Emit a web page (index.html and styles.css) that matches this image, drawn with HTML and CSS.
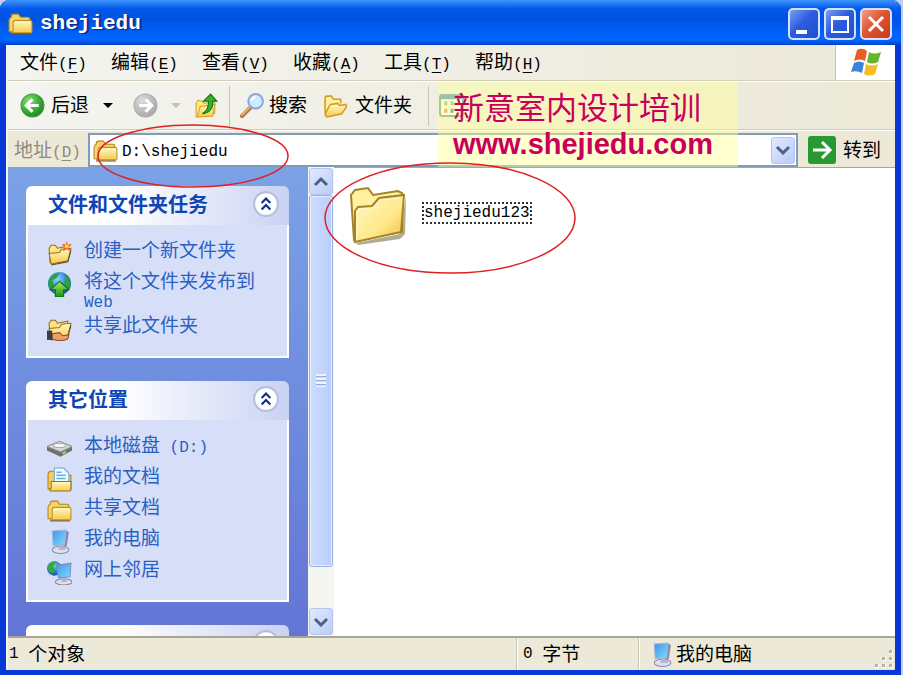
FILE: index.html
```
<!DOCTYPE html>
<html lang="zh-CN">
<head>
<meta charset="utf-8">
<title>shejiedu</title>
<link rel="stylesheet" href="styles.css">
</head>
<body>
<svg class="defs" width="0" height="0" aria-hidden="true">
	<defs>
		<linearGradient id="gFolder" x1="0" y1="0" x2="0" y2="1"><stop offset="0" stop-color="#fffbc4"/><stop offset="1" stop-color="#f8c84c"/></linearGradient>
		<linearGradient id="gBig" x1="0" y1="0" x2="1" y2="1"><stop offset="0" stop-color="#fffac0"/><stop offset=".6" stop-color="#ffe88c"/><stop offset="1" stop-color="#f2bd3c"/></linearGradient>
		<radialGradient id="gGreen" cx=".35" cy=".3" r=".8"><stop offset="0" stop-color="#8fdc7c"/><stop offset=".55" stop-color="#3aad36"/><stop offset="1" stop-color="#1c7d1c"/></radialGradient>
		<radialGradient id="gGrey" cx=".35" cy=".3" r=".8"><stop offset="0" stop-color="#dcdcdc"/><stop offset="1" stop-color="#a4a4a4"/></radialGradient>
		<linearGradient id="gScreen" x1="0" y1="0" x2="1" y2="1"><stop offset="0" stop-color="#3f93e6"/><stop offset="1" stop-color="#7fdcff"/></linearGradient>
		<radialGradient id="gGlobe" cx=".4" cy=".3" r=".8"><stop offset="0" stop-color="#8ed4ff"/><stop offset=".6" stop-color="#2677d0"/><stop offset="1" stop-color="#123f94"/></radialGradient>
		<linearGradient id="gArrow" x1="0" y1="0" x2="0" y2="1"><stop offset="0" stop-color="#a8ee58"/><stop offset="1" stop-color="#189018"/></linearGradient>
	</defs>
	<symbol id="folder" viewBox="0 0 24 24">
		<path d="M3 6Q1 7 1 9V20H21V8Q21 6 19 6H12L10 3H5Q3 3 3 6Z" fill="#f6d469" stroke="#b98518"/>
		<path d="M5 11Q5 9 7 9H21Q23 9 23 11V20Q23 21 22 21H3Q5 20 5 18Z" fill="url(#gFolder)" stroke="#c08f20"/>
		<path d="M3 22H22" stroke="#73540f" stroke-width="1"/>
	</symbol>
	<symbol id="folders" viewBox="0 0 24 24">
		<path d="M2 19V5Q2 3 4 3H8L10 6H17V10" fill="#fff2a0" stroke="#d39c20" stroke-width="1.5"/>
		<path d="M2 20L7 11L14 10L16 12L22 11Q23 12 22 14L18 20L4 23Q2 22 2 20Z" fill="url(#gFolder)" stroke="#d39c20" stroke-width="1.5"/>
	</symbol>
	<symbol id="openfolder" viewBox="0 0 24 24">
		<path d="M3 21L2 7L4 4L8 4L10 7L20 5V15L18 20Z" fill="#ffe37c" stroke="#94701e"/>
		<path d="M2 12L12 11L14 8L23 7L20 19L4 22Z" fill="url(#gFolder)" stroke="#94701e"/>
		<path d="M4 23L20 20L23 9" fill="none" stroke="#5e4a22"/>
	</symbol>
	<symbol id="back" viewBox="0 0 24 24">
		<circle cx="12" cy="12" r="11" fill="url(#gGreen)" stroke="#3c9b38"/>
		<path d="M18 12H7M12 6L6 12L12 18" fill="none" stroke="#fff" stroke-width="3"/>
	</symbol>
	<symbol id="forward" viewBox="0 0 24 24">
		<circle cx="12" cy="12" r="11" fill="url(#gGrey)" stroke="#aaa"/>
		<path d="M6 12H17M12 6L18 12L12 18" fill="none" stroke="#fff" stroke-width="3"/>
	</symbol>
	<symbol id="up" viewBox="0 0 24 24">
		<path d="M2 23V10L4 7L8 8L10 10L20 8V19L17 22Z" fill="#ffe97e" stroke="#d2a52e"/>
		<path d="M3 23L6 13L20 11L18 22Z" fill="url(#gFolder)" stroke="#d2a52e"/>
		<path d="M8 20Q14 17 14 8H9L16 1L22 8H18Q19 18 8 20Z" fill="#35b02c" stroke="#137713"/>
	</symbol>
	<symbol id="search" viewBox="0 0 24 24">
		<path d="M2 22L10 14" stroke="#b5793e" stroke-width="4" stroke-linecap="round"/>
		<path d="M2 21L9 14" stroke="#f0b57a" stroke-width="1.5" stroke-linecap="round"/>
		<circle cx="15" cy="8" r="7" fill="#cdeaff" stroke="#8ca9de" stroke-width="2"/>
		<path d="M11 7Q12 4 15 4" fill="none" stroke="#fff" stroke-width="2"/>
	</symbol>
	<symbol id="views" viewBox="0 0 24 24">
		<rect x="1" y="2" width="22" height="20" rx="2" fill="#fffff0" stroke="#5e93b5" stroke-width="2"/>
		<path d="M1 4H23" stroke="#4d8fc0" stroke-width="4"/>
		<path d="M5 8h3v4h-3zM11 8h3v4h-3z" fill="#7cb58d"/><path d="M5 15h3v4h-3z" fill="#ed7546"/><path d="M11 15h3v4h-3z" fill="#3f73be"/>
	</symbol>
	<symbol id="newfolder" viewBox="0 0 24 24">
		<use href="#openfolder"/>
		<path d="M19 0L20 3L24 3L21 6L23 10L19 8L15 10L17 6L14 3L18 3Z" fill="#f46422"/><circle cx="19" cy="5" r="2" fill="#ffcf4a"/>
	</symbol>
	<symbol id="publish" viewBox="0 0 24 24">
		<circle cx="12" cy="11" r="11" fill="url(#gGlobe)"/>
		<path d="M2 7Q6 0 12 1L9 6L5 8L7 13L3 16Q0 12 2 7ZM16 2Q22 5 23 12L20 17L16 11L18 7Z" fill="#2ea13c"/>
		<path d="M12 9L21 17H16V24H8V17H3Z" fill="url(#gArrow)" stroke="#096a14"/>
	</symbol>
	<symbol id="share" viewBox="0 0 24 24">
		<use href="#openfolder"/>
		<path d="M5 17L12 16L15 19L21 18L20 22Q13 25 5 22Z" fill="#e9a268" stroke="#8f4c24"/>
		<path d="M0 14H5V23H0Z" fill="#3c3c48"/>
	</symbol>
	<symbol id="disk" viewBox="0 0 24 24">
		<path d="M0 10L12 5L24 10V14L13 20L0 14Z" fill="#707070"/>
		<path d="M0 10L12 5L24 10L13 15Z" fill="#d9d9d6" stroke="#999"/>
		<ellipse cx="12" cy="9" rx="6" ry="2" fill="#f5f5f5" stroke="#aaa"/>
		<path d="M15 17L18 15" stroke="#6ff06f" stroke-width="2"/>
	</symbol>
	<symbol id="docs" viewBox="0 0 24 24">
		<path d="M1 21V7Q1 4 4 4H8V21Z" fill="#f4cd5c" stroke="#b18018"/>
		<path d="M20 8H23V21H18Z" fill="#f4cd5c" stroke="#b18018"/>
		<path d="M7 1H16L21 6V17H7Z" fill="#eefbff" stroke="#6ea5cc"/>
		<path d="M9 5H14M9 8H18M9 11H18" stroke="#5fb4e0" stroke-width="1.5"/>
		<path d="M4 14H23V21Q23 23 21 23H3Q2 22 4 20Z" fill="url(#gFolder)" stroke="#98701a"/>
	</symbol>
	<symbol id="computer" viewBox="0 0 24 24">
		<ellipse cx="13" cy="20" rx="8" ry="3.5" fill="#dedeed" stroke="#8c8cae"/>
		<path d="M12 15L18 14V20H11Z" fill="#b2b2d0"/>
		<path d="M18 1L21 3L19 16L16 17Z" fill="#8787b4"/>
		<path d="M5 2L18 1L17 15L6 16Z" fill="url(#gScreen)" stroke="#a4b4da"/>
	</symbol>
	<symbol id="network" viewBox="0 0 24 24">
		<circle cx="7" cy="8" r="7" fill="url(#gGlobe)"/>
		<path d="M1 5Q5 0 9 2L6 6L8 10L4 13Q0 9 1 5Z" fill="#35a936"/>
		<ellipse cx="16" cy="21" rx="8" ry="3" fill="#dedeed" stroke="#8080a2"/>
		<path d="M15 16H19V21H14Z" fill="#b2b2d0"/>
		<path d="M9 5L23 3L22 16L11 17Z" fill="url(#gScreen)" stroke="#7c8fc2"/>
	</symbol>
	<symbol id="chevrons" viewBox="0 0 24 24">
		<circle cx="12" cy="12" r="11" fill="#fff" stroke="#b5bde2" stroke-width="2"/>
		<path d="M8 11L12 7L16 11M8 17L12 13L16 17" fill="none" stroke="#0e2f86" stroke-width="2"/>
	</symbol>
</svg>

<div class="window">
	<header class="titlebar">
		<svg class="icon"><use href="#folder"/></svg>
		<h1>shejiedu</h1>
		<button type="button" class="win-btn" aria-label="最小化"><svg viewBox="0 0 28 28"><path d="M6 22H17" stroke="#fff" stroke-width="4"/></svg></button>
		<button type="button" class="win-btn" aria-label="最大化"><svg viewBox="0 0 28 28"><path d="M6 7H22V22H6Z" fill="none" stroke="#fff" stroke-width="2"/><path d="M5 8H23" stroke="#fff" stroke-width="4"/></svg></button>
		<button type="button" class="win-btn close" aria-label="关闭"><svg viewBox="0 0 28 28"><path d="M7 7L21 21M21 7L7 21" stroke="#fff" stroke-width="3"/></svg></button>
	</header>

	<div class="client">
		<nav class="menubar">
			<button type="button">文件<span class="en">(<u>F</u>)</span></button>
			<button type="button">编辑<span class="en">(<u>E</u>)</span></button>
			<button type="button">查看<span class="en">(<u>V</u>)</span></button>
			<button type="button">收藏<span class="en">(<u>A</u>)</span></button>
			<button type="button">工具<span class="en">(<u>T</u>)</span></button>
			<button type="button">帮助<span class="en">(<u>H</u>)</span></button>
			<div class="flag">
				<svg viewBox="0 0 32 30">
					<path d="M7 2Q12 -1 17 3L15 13Q10 10 4 13Z" fill="#ee5a24"/>
					<path d="M19 4Q24 7 31 4L28 14Q22 17 17 14Z" fill="#62b52c"/>
					<path d="M4 15Q9 12 14 15L12 25Q7 22 1 24Z" fill="#3b83d8"/>
					<path d="M16 16Q22 19 28 16L25 26Q19 29 14 26Z" fill="#f8bd1c"/>
				</svg>
			</div>
		</nav>

		<div class="toolbar">
			<button type="button" class="back"><svg class="icon"><use href="#back"/></svg>后退</button>
			<button type="button" class="drop" aria-label="后退列表"></button>
			<button type="button" disabled aria-label="前进"><svg class="icon"><use href="#forward"/></svg></button>
			<button type="button" class="drop" disabled aria-label="前进列表"></button>
			<button type="button" aria-label="向上"><svg class="icon"><use href="#up"/></svg></button>
			<span class="sep"></span>
			<button type="button"><svg class="icon"><use href="#search"/></svg>搜索</button>
			<button type="button" class="folders"><svg class="icon"><use href="#folders"/></svg>文件夹</button>
			<span class="sep"></span>
			<button type="button" aria-label="查看"><svg class="icon"><use href="#views"/></svg></button>
		</div>

		<form class="address">
			<label for="path">地址<span class="en">(<u>D</u>)</span></label>
			<div class="field">
				<svg class="icon"><use href="#folder"/></svg>
				<input id="path" type="text" value="D:\shejiedu">
				<button type="button" class="arrow-btn" aria-label="展开"><svg viewBox="0 0 16 16"><path d="M2 5L8 11L14 5" fill="none" stroke="#4d6185" stroke-width="3"/></svg></button>
				<svg class="mark mark-path" viewBox="0 0 192 64"><ellipse cx="96" cy="32" rx="95" ry="31"/></svg>
			</div>
			<button type="button" class="go">
				<svg viewBox="0 0 28 28"><rect width="28" height="28" rx="3" fill="#279a31"/><path d="M5 14H21M14 6L22 14L14 22" fill="none" stroke="#fff" stroke-width="3"/></svg>转到
			</button>
		</form>

		<div class="content">
			<aside class="sidebar">
				<section class="panel">
					<h2>文件和文件夹任务<button type="button" aria-label="折叠"><svg><use href="#chevrons"/></svg></button></h2>
					<ul>
						<li><svg class="icon"><use href="#newfolder"/></svg><a href="#">创建一个新文件夹</a></li>
						<li><svg class="icon"><use href="#publish"/></svg><a href="#">将这个文件夹发布到<br><span class="en">Web</span></a></li>
						<li><svg class="icon"><use href="#share"/></svg><a href="#">共享此文件夹</a></li>
					</ul>
				</section>
				<section class="panel">
					<h2>其它位置<button type="button" aria-label="折叠"><svg><use href="#chevrons"/></svg></button></h2>
					<ul>
						<li><svg class="icon"><use href="#disk"/></svg><a href="#">本地磁盘<span class="en"> (D:)</span></a></li>
						<li><svg class="icon"><use href="#docs"/></svg><a href="#">我的文档</a></li>
						<li><svg class="icon"><use href="#folder"/></svg><a href="#">共享文档</a></li>
						<li><svg class="icon"><use href="#computer"/></svg><a href="#">我的电脑</a></li>
						<li><svg class="icon"><use href="#network"/></svg><a href="#">网上邻居</a></li>
					</ul>
				</section>
				<section class="panel">
					<h2><button type="button" aria-label="折叠"><svg><use href="#chevrons"/></svg></button></h2>
				</section>
			</aside>

			<div class="scrollbar">
				<button type="button" class="arrow-btn" aria-label="向上滚动"><svg viewBox="0 0 16 16"><path d="M2 11L8 5L14 11" fill="none" stroke="#4d6185" stroke-width="3"/></svg></button>
				<div class="thumb"><i></i></div>
				<div class="track"></div>
				<button type="button" class="arrow-btn" aria-label="向下滚动"><svg viewBox="0 0 16 16"><path d="M2 5L8 11L14 5" fill="none" stroke="#4d6185" stroke-width="3"/></svg></button>
			</div>

			<main class="files">
				<a class="file" href="#">
					<svg viewBox="0 0 60 60">
						<path d="M8 57L52 48L58 10L57 48L52 53L10 59Z" fill="#b3ab90"/>
						<path d="M6 54L3 9L7 4L20 2L25 9L50 5L54 7V46Z" fill="#fff0a2" stroke="#a58427" stroke-width="2"/>
						<path d="M7 56L7 25L10 21L24 20L31 12L56 9L53 46Z" fill="url(#gBig)" stroke="#a58427" stroke-width="2"/>
						<path d="M9 53L9 26L11 23L25 22L32 14L52 12" fill="none" stroke="#fff9d8"/>
					</svg>
					<span>shejiedu123</span>
				</a>
				<svg class="mark mark-file" viewBox="0 0 252 112"><ellipse cx="126" cy="56" rx="125" ry="55"/></svg>
			</main>
		</div>

		<footer class="statusbar">
			<span class="cell objects"><span class="en">1 </span>个对象</span>
			<span class="cell bytes"><span class="en">0 </span>字节</span>
			<span class="cell place"><svg class="icon"><use href="#computer"/></svg>我的电脑</span>
			<svg class="grip" viewBox="0 0 18 18"><path d="M14 0h4v4h-4zM7 7h4v4h-4zM14 7h4v4h-4zM0 14h4v4h-4zM7 14h4v4h-4zM14 14h4v4h-4z" fill="#fff"/><path d="M14 0h3v3h-3zM7 7h3v3h-3zM14 7h3v3h-3zM0 14h3v3h-3zM7 14h3v3h-3zM14 14h3v3h-3z" fill="#b8b4a0"/></svg>
		</footer>
	</div>

	<div class="watermark">
		<p>新意室内设计培训</p>
		<p class="site">www.shejiedu.com</p>
	</div>
</div>
</body>
</html>
```
FILE: styles.css
```
*{margin: 0;padding: 0;box-sizing: border-box;}
html,body{height: 100%;}
body{font: 19px/19px "Liberation Sans","Noto Sans CJK SC",sans-serif;color: #000;background-color: #c3cdec;overflow: hidden;}
button,input{font: inherit;color: inherit;border: 0;background: none;}
svg{display: block;flex: none;}
a{color: inherit;text-decoration: none;}
ul{list-style: none;}
.defs{position: absolute;}
.icon{width: 25px;height: 25px;}
.en{font-family: "Liberation Mono",monospace;font-size: 16px;line-height: 12px;white-space: pre;}
u{text-underline-offset: 3px;}

.window{position: relative;display: flex;flex-direction: column;height: 100%;margin-right: 2px;padding: 0 6px 5px;background-color: #0839d6;border-radius: 9px 9px 0 0;overflow: hidden;}
.titlebar{display: flex;align-items: center;gap: 4px;height: 45px;margin: 0 -6px;padding: 2px 9px 0 8px;background: linear-gradient(#3d95ff 0,#2a80f5 3px,#0058ea 9px,#0053e1 20px,#0062fc 34px,#0066ff 40px,#0040c8 45px);}
.titlebar h1{flex: 1;padding-left: 3px;font: bold 21px/28px "Liberation Mono",monospace;color: #fff;text-shadow: 2px 1px 1px #0a2a8a;}
.win-btn{width: 32px;height: 32px;border: 2px solid #d3e2ff;border-radius: 5px;background: linear-gradient(135deg,#7b9ff0,#2b5ce0 45%,#2350cf);}
.win-btn.close{background: linear-gradient(135deg,#f0a088,#df5432 45%,#c63a16);}

.client{flex: 1;display: flex;flex-direction: column;min-height: 0;background-color: #ece9d8;border-left: 2px solid #f4f4ee;}
.menubar{display: flex;height: 36px;background: linear-gradient(90deg,#f4f4f0,#ece9d8);border-bottom: 1px solid #d0cdbb;}
.menubar button{width: 91px;white-space: nowrap;}
.menubar .flag{display: flex;align-items: center;justify-content: center;width: 60px;margin-left: auto;background-color: #fff;border-left: 1px solid #c8c5b4;}
.flag svg{width: 32px;height: 30px;}

.toolbar{display: flex;align-items: center;height: 49px;padding-left: 12px;background: linear-gradient(90deg,#f4f4f0,#ece9d8);border-top: 1px solid #fff;border-bottom: 1px solid #d0cdbb;}
.toolbar button{display: flex;align-items: center;gap: 4px;white-space: nowrap;}
.toolbar .back{gap: 6px;}
.toolbar .drop{width: 38px;justify-content: center;margin-right: 6px;}
.toolbar .drop:after{content: "";border: 5px solid transparent;border-top-color: #000;border-bottom: 0;}
.toolbar .drop:disabled{width: 36px;margin-right: 0;}
.toolbar .drop:disabled:after{border-top-color: #c4c2ba;}
.toolbar .sep{width: 1px;height: 40px;margin: 0 10px;background-color: #c5c2b3;}
.toolbar .folders{gap: 7px;margin: 0 6px 0 16px;}

.address{display: flex;align-items: center;height: 37px;padding: 2px 14px 0 6px;border-top: 1px solid #fff;}
.address label{width: 74px;color: #8d8b80;white-space: nowrap;}
.field{position: relative;flex: 1;display: flex;align-items: center;height: 34px;padding: 0 1px 0 3px;background-color: #fff;border: 2px solid #7f9db9;min-width: 0;}
.field input{flex: 1;min-width: 0;padding: 4px 0 0 4px;font: 16px/19px "Liberation Mono",monospace;outline: 0;}
.arrow-btn{display: flex;align-items: center;justify-content: center;width: 24px;height: 27px;border: 1px solid #b3c5f3;border-radius: 3px;background: linear-gradient(135deg,#e1eaff,#b9cbf7);}
.arrow-btn svg{width: 16px;height: 16px;}
.go{display: flex;align-items: center;gap: 7px;margin-left: 10px;white-space: nowrap;}
.go svg{width: 28px;height: 28px;}
.mark{position: absolute;fill: none;stroke: #e02020;stroke-width: 1.5;z-index: 3;}
.mark-path{left: 7px;top: -11px;width: 192px;height: 64px;}

.content{flex: 1;display: flex;min-height: 0;}
.sidebar{width: 300px;padding: 19px 19px 0 18px;background: linear-gradient(#7ba2e7,#6375d6);overflow: hidden;}
.panel{margin-bottom: 23px;}
.panel h2{display: flex;align-items: center;height: 39px;padding: 0 10px 0 22px;font-size: 20px;color: #1045b4;background: linear-gradient(90deg,#fff 35%,#c9d2f3);border-radius: 6px 6px 0 0;}
.panel h2 button{margin: 0 0 4px auto;}
.panel h2 svg{width: 26px;height: 26px;}
.panel ul{display: flex;flex-direction: column;gap: 6px;padding: 16px 0 15px 19px;background-color: #d6dff7;border: 2px solid #fff;border-top: 0;}
.panel li{display: flex;gap: 12px;min-height: 25px;color: #2a5fc4;white-space: nowrap;}

.scrollbar{display: flex;flex-direction: column;align-items: center;width: 26px;padding: 1px 0;background-color: #f6f6f0;}
.thumb{flex: 9;display: flex;align-items: center;justify-content: center;width: 24px;background: linear-gradient(90deg,#cddcff,#b9cdfc);border: 1px solid #98b0e6;border-radius: 3px;box-shadow: inset 0 0 0 1px #e6eeff;}
.thumb i{width: 10px;height: 13px;background: repeating-linear-gradient(#eef3ff 0 2px,#96afe2 2px 3px,#c8d8ff 3px 4px);}
.track{flex: 1;}

.files{position: relative;flex: 1;padding: 18px 14px;background-color: #fff;border-top: 1px solid #aca899;}
.file{display: inline-flex;align-items: center;gap: 14px;}
.file svg{width: 60px;height: 60px;}
.file span{margin-bottom: 6px;border: 2px dotted #333;font: 16px/18px "Liberation Mono",monospace;}
.mark-file{left: -10px;top: -6px;width: 252px;height: 112px;}

.statusbar{position: relative;display: flex;height: 34px;border-top: 2px solid #a9a695;}
.cell{display: flex;align-items: center;white-space: pre;}
.objects{flex: 1;padding-left: 1px;}
.bytes{width: 122px;padding-left: 6px;}
.place{width: 257px;padding-left: 10px;gap: 2px;}
.bytes,.place{border-left: 1px solid #c9c6b5;box-shadow: inset 1px 0 0 #fff;}
.grip{position: absolute;right: 2px;bottom: 2px;width: 18px;height: 18px;}

.watermark{position: absolute;left: 438px;top: 82px;width: 300px;height: 85px;padding: 10px 15px;background-color: rgba(255,255,150,.45);color: #c8005c;white-space: nowrap;z-index: 2;}
.watermark p{font-size: 31px;line-height: 34px;}
.watermark .site{font-size: 29px;font-weight: bold;line-height: 36px;}
```
